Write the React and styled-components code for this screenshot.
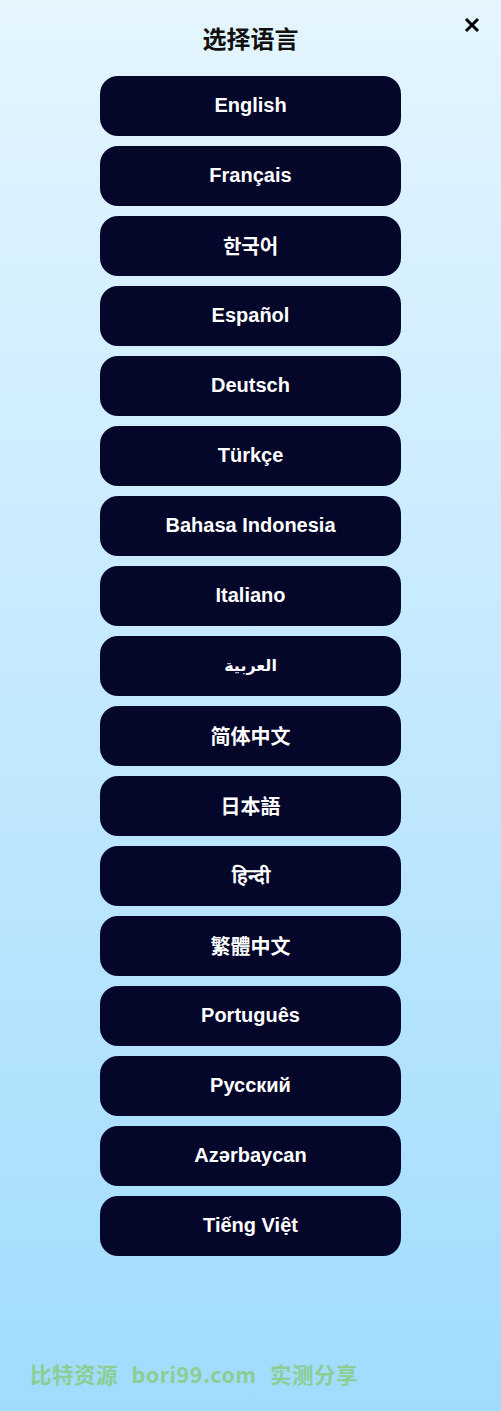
import React from "react";
import styled, { createGlobalStyle } from "styled-components";

const GlobalStyle = createGlobalStyle`
  html, body {
    margin: 0;
    padding: 0;
  }
  body {
    font-family: "Liberation Sans", Arial, "Noto Sans CJK SC", sans-serif;
  }
`;

const Page = styled.div`
  width: 100%;
  min-height: 1411px;
  background: linear-gradient(180deg, #e4f5fe 0%, #a1dcfd 100%);
  display: flex;
  flex-direction: column;
  align-items: center;
  position: relative;
`;

const Header = styled.header`
  width: 100%;
  height: 76px;
  display: flex;
  justify-content: center;
  padding-top: 22px;
  box-sizing: border-box;
`;

const Title = styled.h2`
  margin: 0;
  font-size: 24px;
  font-weight: 700;
  color: #111;
  font-family: "Noto Sans CJK SC", sans-serif;
  line-height: 32px;
`;

const CloseButton = styled.button`
  position: absolute;
  top: 14px;
  right: 18px;
  width: 22px;
  height: 22px;
  padding: 0;
  border: none;
  background: transparent;
  cursor: pointer;
  display: flex;
  align-items: center;
  justify-content: center;
`;

const LangList = styled.div`
  display: flex;
  flex-direction: column;
  gap: 10px;
`;

const LangButton = styled.button`
  width: 301px;
  height: 60px;
  padding: 0 0 2px;
  border: none;
  border-radius: 18px;
  background: #05072a;
  color: #fff;
  font-family: "Liberation Sans", Arial, "Noto Sans CJK SC", "DejaVu Sans", sans-serif;
  font-size: ${p => (p.$small ? "16px" : "20px")};
  font-weight: 700;
  cursor: pointer;
`;

const Watermark = styled.div`
  position: absolute;
  left: 30px;
  top: 1358px;
  color: #8ccd93;
  font-family: "Noto Sans CJK SC", sans-serif;
  font-size: 21.5px;
  font-weight: 700;
  letter-spacing: 0.5px;
  word-spacing: 8px;
`;

const languages = [
  "English",
  "Français",
  "한국어",
  "Español",
  "Deutsch",
  "Türkçe",
  "Bahasa Indonesia",
  "Italiano",
  "العربية",
  "简体中文",
  "日本語",
  "हिन्दी",
  "繁體中文",
  "Português",
  "Русский",
  "Azərbaycan",
  "Tiếng Việt",
];

const App = () => {
  return (
    <>
      <GlobalStyle />
      <Page>
        <CloseButton aria-label="close">
          <svg width="16" height="16" viewBox="0 0 16 16">
            <path d="M2 2 L14 14 M14 2 L2 14" stroke="#000" strokeWidth="3" strokeLinecap="butt" />
          </svg>
        </CloseButton>
        <Header>
          <Title>选择语言</Title>
        </Header>
        <LangList>
          {languages.map(lang => (
            <LangButton key={lang} $small={lang === "العربية"}>
              {lang}
            </LangButton>
          ))}
        </LangList>
        <Watermark>比特资源 bori99.com 实测分享</Watermark>
      </Page>
    </>
  );
};

export default App;
